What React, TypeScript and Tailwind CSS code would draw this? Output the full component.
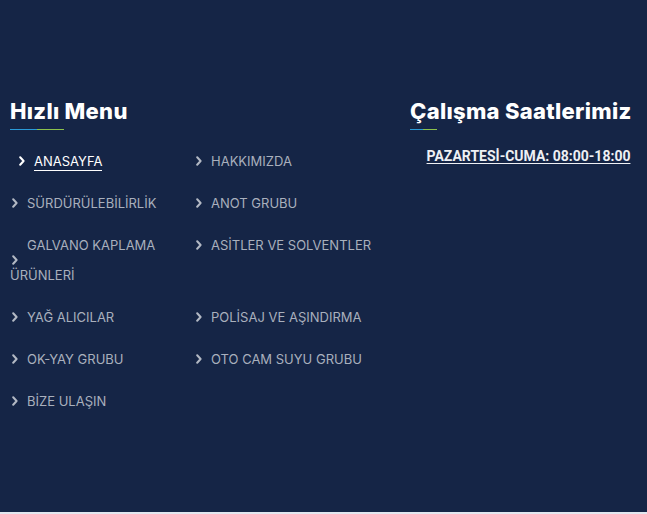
interface MenuLink {
  label: string;
  active?: boolean;
}

// laid out row by row: left, right, left, right...
const links: MenuLink[] = [
  { label: "ANASAYFA", active: true },
  { label: "HAKKIMIZDA" },
  { label: "SÜRDÜRÜLEBİLİRLİK" },
  { label: "ANOT GRUBU" },
  { label: "GALVANO KAPLAMA ÜRÜNLERİ" },
  { label: "ASİTLER VE SOLVENTLER" },
  { label: "YAĞ ALICILAR" },
  { label: "POLİSAJ VE AŞINDIRMA" },
  { label: "OK-YAY GRUBU" },
  { label: "OTO CAM SUYU GRUBU" },
  { label: "BİZE ULAŞIN" },
];

function Chevron({ className }: { className?: string }) {
  return (
    <svg viewBox="0 0 6 10" width="6" height="10" className={className}>
      <path d="M1.2 1.3 L4.6 5 L1.2 8.7" fill="none" stroke="currentColor" strokeWidth="2" strokeLinecap="round" strokeLinejoin="round" />
    </svg>
  );
}

function Heading({ title, lineWidth }: { title: string; lineWidth: string }) {
  return (
    <div>
      <h2 className="text-[22px] font-extrabold leading-[30px] text-white tracking-[0.3px]">{title}</h2>
      <div
        className={`mt-[3px] h-px ${lineWidth}`}
        style={{ background: "linear-gradient(90deg, #2a9bd8 0%, #2a9bd8 50%, #8cc24c 50%, #8cc24c 100%)" }}
      />
    </div>
  );
}

function LinkItem({ link }: { link: MenuLink }) {
  return (
    <li className="relative self-start leading-[30px] text-[13px]">
      <Chevron
        className={`absolute top-1/2 -translate-y-1/2 ${
          link.active ? "left-[9px] text-white" : "left-[2px] text-[#b3b9c4]"
        }`}
      />
      <span className={link.active ? "block indent-[24px] text-white" : "block indent-[17px] text-[#a9b0bd]"}>
        <span className={link.active ? "border-b border-white pb-[1px]" : ""}>{link.label}</span>
      </span>
    </li>
  );
}

export default function App() {
  return (
    <div style={{ fontFamily: "Inter, 'Noto Sans', sans-serif" }}>
      <section className="h-[512px] bg-[#152546] pt-[96px] pl-[10px]">
        <div className="flex">
          <div className="w-[400px]">
            <Heading title="Hızlı Menu" lineWidth="w-[54px]" />
            <ul className="mt-[16px] grid grid-cols-[184px_206px] gap-y-[12px]">
              {links.map((link) => (
                <LinkItem key={link.label} link={link} />
              ))}
            </ul>
          </div>

          <div className="flex-1">
            <Heading title="Çalışma Saatlerimiz" lineWidth="w-[27px]" />
            <p
              className="mt-[16px] text-center text-[14px] leading-[20px] font-bold text-[#eef0f4] underline underline-offset-[2px]"
              style={{ fontFamily: "Roboto, 'Liberation Sans', sans-serif" }}
            >
              PAZARTESİ-CUMA: 08:00-18:00
            </p>
          </div>
        </div>
      </section>
      <div className="h-[2px] bg-[#e2e7ef]" />
    </div>
  );
}
